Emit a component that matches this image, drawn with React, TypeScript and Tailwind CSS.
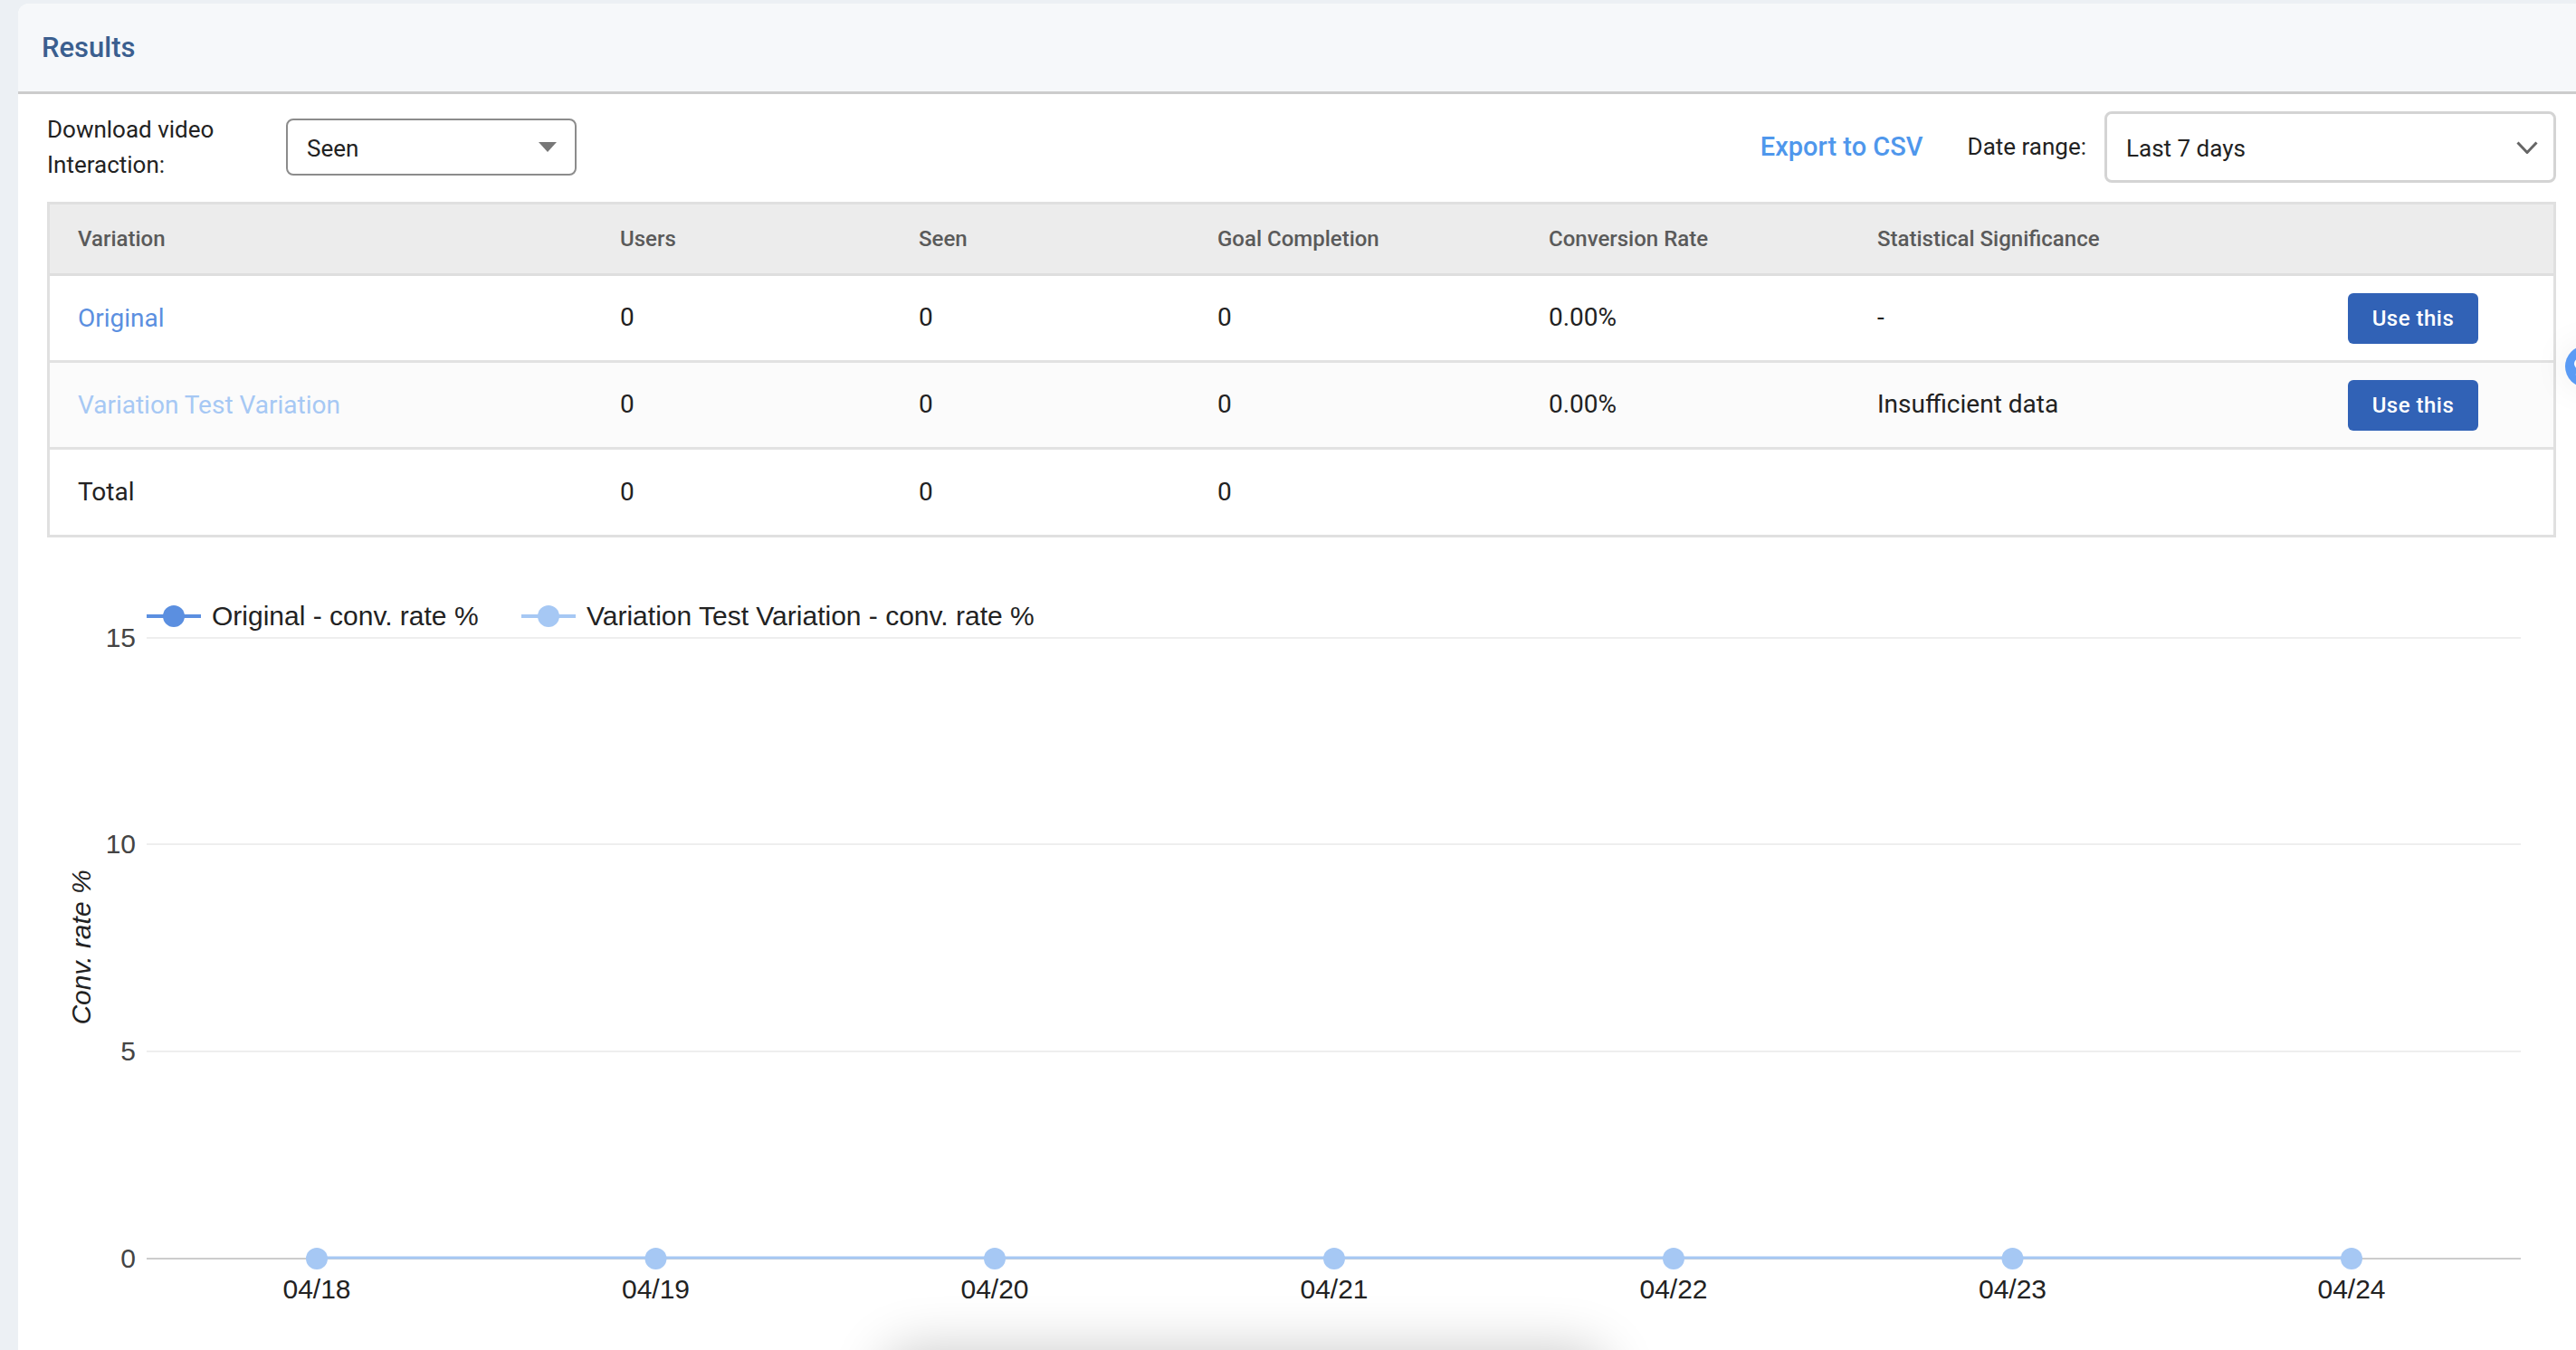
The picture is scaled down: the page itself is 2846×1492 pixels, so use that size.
const roboto = "font-['Roboto',sans-serif]";

const rows = [
  { name: 'Original', nameClass: 'text-[#5b8fe0]', rowClass: 'bg-white border-b-[3px] border-[#e2e2e2]', conv: '0.00%', sig: '-', action: true },
  { name: 'Variation Test Variation', nameClass: 'text-[#a6c8f4]', rowClass: 'bg-[#fbfbfb] border-b-[3px] border-[#e2e2e2]', conv: '0.00%', sig: 'Insufficient data', action: true },
  { name: 'Total', nameClass: 'text-[#222222]', rowClass: 'bg-white', conv: '', sig: '', action: false },
];

const yTicks = [
  { label: '15', y: 704 },
  { label: '10', y: 932 },
  { label: '5', y: 1161 },
];

const dates = ['04/18', '04/19', '04/20', '04/21', '04/22', '04/23', '04/24'];
const pointX = [350, 724.5, 1099, 1474, 1849, 2223.5, 2598];

function Chart() {
  return (
    <svg viewBox="20 593 2826 899" className="block h-[899px] w-[2826px] font-['Liberation_Sans',sans-serif]">
      {yTicks.map((t) => (
        <g key={t.label}>
          <line x1="162" x2="2785" y1={t.y} y2={t.y} stroke="#eeeeee" strokeWidth="2" />
          <text x="150" y={t.y + 10} textAnchor="end" fontSize="30" fill="#444444">{t.label}</text>
        </g>
      ))}
      <line x1="162" x2="2785" y1="1390" y2="1390" stroke="#cccccc" strokeWidth="2" />
      <text x="150" y="1400" textAnchor="end" fontSize="30" fill="#444444">0</text>
      <text transform="translate(100 1046) rotate(-90)" textAnchor="middle" fontSize="30" fontStyle="italic" fill="#222222">Conv. rate %</text>

      <line x1="162" x2="222" y1="680" y2="680" stroke="#5b8fe0" strokeWidth="4" />
      <circle cx="192" cy="680" r="12" fill="#5b8fe0" />
      <text x="234" y="690" fontSize="30" fill="#222222">Original - conv. rate %</text>
      <line x1="576" x2="636" y1="680" y2="680" stroke="#a6c8f4" strokeWidth="4" />
      <circle cx="606" cy="680" r="12" fill="#a6c8f4" />
      <text x="648" y="690" fontSize="30" fill="#222222">Variation Test Variation - conv. rate %</text>

      <line x1="350" x2="2598" y1="1389" y2="1389" stroke="#a6c8f4" strokeWidth="3" />
      {dates.map((d, i) => (
        <g key={d}>
          <circle cx={pointX[i]} cy="1390" r="12" fill="#a6c8f4" />
          <text x={pointX[i]} y="1434" textAnchor="middle" fontSize="30" fill="#222222">{d}</text>
        </g>
      ))}
    </svg>
  );
}

export default function App() {
  return (
    <div className={`${roboto} relative h-[1492px] w-[2846px] overflow-hidden bg-[#ecf0f4] pl-[20px] pt-[4px]`}>
      <div className="h-[1488px] overflow-hidden rounded-tl-[12px] bg-white">
        <div className="flex h-[100px] items-center border-b-[3px] border-[#cccccc] bg-[#f6f8fa] pl-[26px] pt-[2px]">
          <h2 className="text-[31px] font-medium text-[#3b5f8f]">Results</h2>
        </div>

        <div className="mb-[21px] mt-[19px] flex h-[79px] items-center pl-[32px] pr-[22px] text-[26px] text-[#222222]">
          <div className="w-[264px] leading-[39px]">
            Download video
            <br />
            Interaction:
          </div>
          <div className="flex h-[63px] w-[321px] items-center justify-between rounded-[8px] border-[2px] border-[#8c8c8c] pl-[21px] pr-[20px]">
            <span className="pt-[4px]">Seen</span>
            <svg viewBox="0 0 20 11" className="h-[11px] w-[20px]">
              <path d="M0 0h20L10 11z" fill="#777777" />
            </svg>
          </div>
          <a className="ml-auto text-[29px] font-medium text-[#4f97ec]">Export to CSV</a>
          <span className="ml-[49px]">Date range:</span>
          <div className="ml-[20px] flex h-[79px] w-[499px] items-center justify-between rounded-[8px] border-[3px] border-[#d4d4d4] pl-[21px] pr-[17px]">
            <span className="pt-[4px]">Last 7 days</span>
            <svg viewBox="0 0 24 14" className="h-[14px] w-[24px]" fill="none" stroke="#666666" strokeWidth="3">
              <path d="M1.5 1.5 12 12.5 22.5 1.5" />
            </svg>
          </div>
        </div>

        <div className="ml-[32px] mr-[22px] border-[3px] border-[#e0e0e0]">
          <table className="w-full table-fixed text-left">
            <colgroup>
              <col className="w-[600px]" />
              <col className="w-[330px]" />
              <col className="w-[330px]" />
              <col className="w-[366px]" />
              <col className="w-[363px]" />
              <col className="w-[520px]" />
              <col />
            </colgroup>
            <thead>
              <tr className="h-[77px] border-b-[3px] border-[#dedede] bg-[#ececec] text-[24px] text-[#5a5a5a]">
                <th className="pl-[31px] font-medium">Variation</th>
                <th className="pl-[30px] font-medium">Users</th>
                <th className="pl-[30px] font-medium">Seen</th>
                <th className="pl-[30px] font-medium">Goal Completion</th>
                <th className="pl-[30px] font-medium">Conversion Rate</th>
                <th className="pl-[30px] font-medium">Statistical Significance</th>
                <th />
              </tr>
            </thead>
            <tbody className="text-[28px] text-[#222222]">
              {rows.map((r, i) => (
                <tr key={r.name} className={`h-[96px] ${r.rowClass}`}>
                  <td className={`pl-[31px] ${i < 2 ? 'pt-[2px]' : ''} ${r.nameClass}`}>{r.name}</td>
                  <td className="pl-[30px]">0</td>
                  <td className="pl-[30px]">0</td>
                  <td className="pl-[30px]">0</td>
                  <td className="pl-[30px]">{r.conv}</td>
                  <td className="pl-[30px]">{r.sig}</td>
                  <td className="pl-[30px] pt-[1px]">
                    {r.action && (
                      <button className="h-[56px] w-[144px] rounded-[6px] bg-[#3162b6] text-[24px] font-medium tracking-[0.5px] text-white">
                        Use this
                      </button>
                    )}
                  </td>
                </tr>
              ))}
            </tbody>
          </table>
        </div>

        <Chart />
      </div>

      {/* help bubble, cut off by the window edge */}
      <div className="absolute left-[2834px] top-[382px] flex h-[46px] w-[46px] items-center rounded-full bg-[#5a9bf5] pl-[10px] shadow-[0_0_40px_rgba(0,0,0,0.08)]">
        <svg viewBox="0 0 12 20" className="h-[20px] w-[12px]">
          <circle cx="6" cy="7" r="6" fill="#ffffff" />
          <path d="M10 10c0 5-3 9-8 10" stroke="#ffffff" strokeWidth="3" fill="none" />
        </svg>
      </div>

      {/* shadow of a panel sitting below the fold */}
      <div className="absolute left-[985px] top-[1500px] h-[80px] w-[780px] rounded-[24px] bg-white shadow-[0_0_60px_10px_rgba(0,0,0,0.2)]" />
    </div>
  );
}
